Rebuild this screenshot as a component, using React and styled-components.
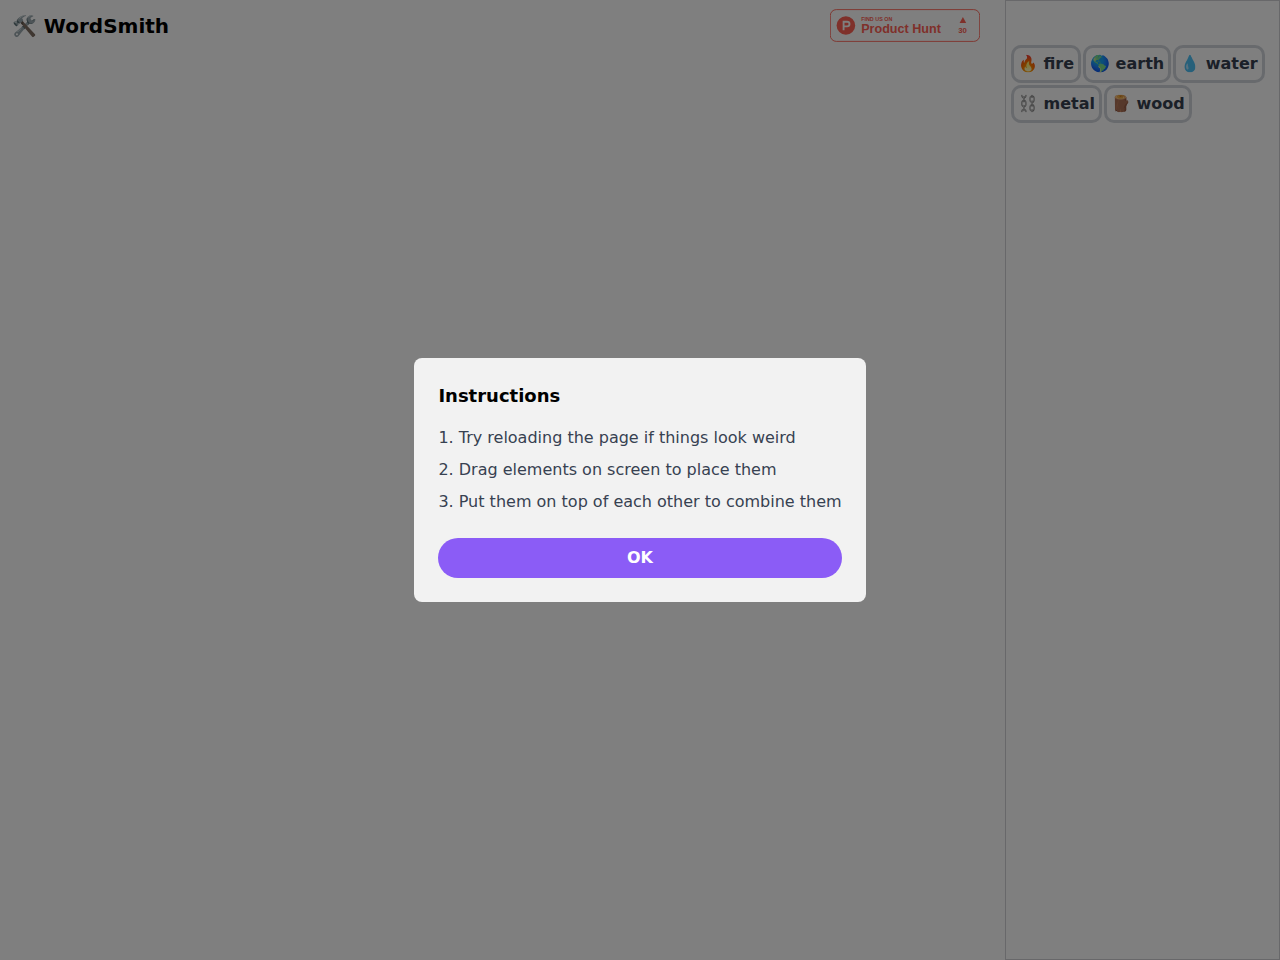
import React, { useState } from "react";
import styled, { createGlobalStyle } from "styled-components";

const GlobalStyle = createGlobalStyle`
  *, *::before, *::after { box-sizing: border-box; }
  body {
    margin: 0;
    background: #ffffff;
    color: #000000;
    font-family: "DejaVu Sans", "Noto Color Emoji", sans-serif;
    font-size: 16px;
    line-height: 24px;
  }
  h1, h2, ol, ul { margin: 0; padding: 0; }
  button { font: inherit; cursor: pointer; }
`;

const Page = styled.div`
  display: flex;
  min-height: 100vh;
`;

const Board = styled.main`
  flex: 1;
  min-width: 0;
`;

const Header = styled.header`
  display: flex;
  justify-content: space-between;
  align-items: flex-start;
  padding: 9px 25px 0 12px;
`;

const Title = styled.h1`
  font-size: 20px;
  line-height: 34px;
  font-weight: 700;
`;

const Emoji = styled.span`
  filter: ${({ $muted }) => ($muted ? `grayscale(${$muted})` : "none")};
`;

const BadgeLink = styled.a`
  display: block;
  color: #ff6154;
  text-decoration: none;
`;

const BadgeArt = styled.svg`
  display: block;
  width: 150px;
  height: 33px;
  fill: currentColor;
  font-family: "Liberation Sans", Arial, sans-serif;
  font-weight: 700;
`;

const Sidebar = styled.aside`
  width: 275px;
  padding: 43px 4px 0;
  border: 1px solid #d1d1d4;
`;

const Elements = styled.ul`
  display: flex;
  flex-wrap: wrap;
  gap: 2px;
  padding: 1px;
  list-style: none;
`;

const Chip = styled.button`
  display: block;
  padding: 4px;
  border: 3px solid #d1d5db;
  border-radius: 10px;
  background: #ffffff;
  color: #374151;
  font-weight: 700;
  white-space: nowrap;
`;

const Overlay = styled.div`
  position: fixed;
  inset: 0;
  display: flex;
  align-items: center;
  justify-content: center;
  background: rgba(0, 0, 0, 0.5);
`;

const Dialog = styled.section`
  padding: 24px;
  border-radius: 8px;
  background: #f2f2f2;
`;

const DialogTitle = styled.h2`
  margin-bottom: 16px;
  font-size: 18px;
  line-height: 28px;
  font-weight: 700;
`;

const Steps = styled.ol`
  display: flex;
  flex-direction: column;
  gap: 8px;
  margin-bottom: 24px;
  color: #374151;
  list-style-position: inside;
`;

const OkButton = styled.button`
  display: block;
  width: 100%;
  padding: 8px 16px;
  border: 0;
  border-radius: 20px;
  background: #8b5cf6;
  color: #ffffff;
  font-weight: 700;
`;

const elements = [
  { icon: "🔥", name: "fire" },
  { icon: "🌎", name: "earth" },
  { icon: "💧", name: "water" },
  { icon: "⛓️", name: "metal", muted: 1 },
  { icon: "🪵", name: "wood" },
];

const steps = [
  "Try reloading the page if things look weird",
  "Drag elements on screen to place them",
  "Put them on top of each other to combine them",
];

function ProductHuntBadge() {
  return (
    <BadgeLink href="#product-hunt">
      <BadgeArt viewBox="0 0 250 54">
        <rect
          x="0.5"
          y="0.5"
          width="249"
          height="53"
          rx="10"
          fill="#ffffff"
          stroke="#ff6154"
          strokeWidth="1.5"
        />
        <circle cx="26.5" cy="27" r="15.5" />
        <path
          transform="translate(11 11.5)"
          fill="#ffffff"
          d="M17.6 15.5h-4.4v-4.65h4.4a2.325 2.325 0 0 1 0 4.65m0-7.75H10.1v15.5h3.1V18.6h4.4a5.425 5.425 0 0 0 0-10.85"
        />
        <text x="52" y="20" fontSize="9">FIND US ON</text>
        <text x="52" y="40" fontSize="21">Product Hunt</text>
        <path d="M221.5 13 227 23H216z" />
        <text x="221" y="40" fontSize="13" textAnchor="middle">30</text>
      </BadgeArt>
    </BadgeLink>
  );
}

export default function App() {
  const [open, setOpen] = useState(true);
  return (
    <>
      <GlobalStyle />
      <Page>
        <Board>
          <Header>
            <Title>
              <Emoji $muted={0.7}>🛠️</Emoji> WordSmith
            </Title>
            <ProductHuntBadge />
          </Header>
        </Board>
        <Sidebar>
          <Elements>
            {elements.map(({ icon, name, muted }) => (
              <li key={name}>
                <Chip type="button">
                  <Emoji $muted={muted}>{icon}</Emoji> {name}
                </Chip>
              </li>
            ))}
          </Elements>
        </Sidebar>
      </Page>
      {open && (
        <Overlay>
          <Dialog role="dialog" aria-modal="true" aria-labelledby="dialog-title">
            <DialogTitle id="dialog-title">Instructions</DialogTitle>
            <Steps>
              {steps.map((step) => (
                <li key={step}>{step}</li>
              ))}
            </Steps>
            <OkButton type="button" onClick={() => setOpen(false)}>
              OK
            </OkButton>
          </Dialog>
        </Overlay>
      )}
    </>
  );
}
